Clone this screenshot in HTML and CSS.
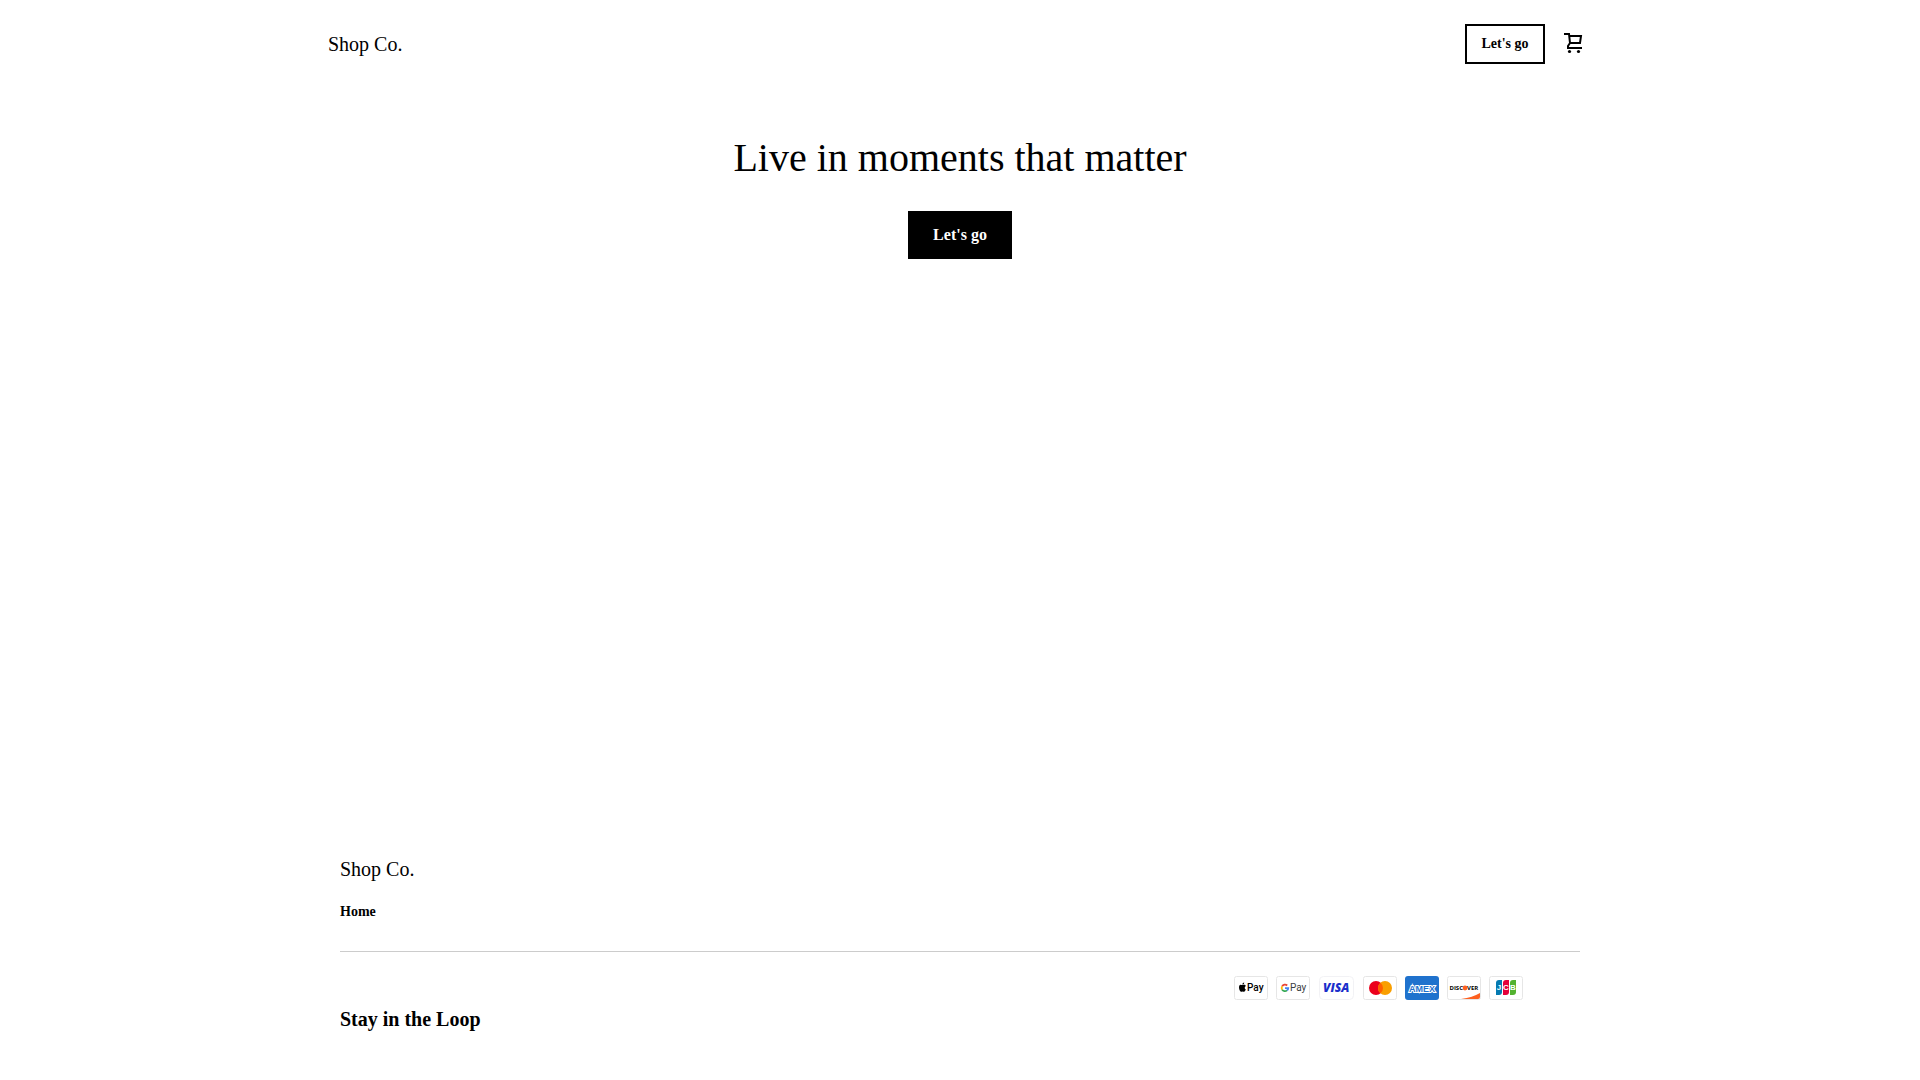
FILE: index.html
```html
<!DOCTYPE html>
<html lang="en">
	<head>
		<meta charset="UTF-8">
		<meta name="viewport" content="width=device-width, initial-scale=1">
		<title>Shop Co.</title>
		<link rel="stylesheet" href="styles.css">
	</head>
	<body>
		<header class="header">
			<a class="brand" href="#">Shop Co.</a>
			<div class="header-actions">
				<button class="btn btn-outline" type="button">Let's go</button>
				<button class="cart" type="button" aria-label="Cart">
					<svg width="20" height="22" viewBox="0 0 20 22" fill="none" stroke="#000" stroke-width="2">
						<path d="M0 2h5l1 9h10l1-7H5M6 11l-2 3v2h14"/>
						<circle cx="5.500" cy="19.500" r="1.600" fill="#000" stroke="none"/>
						<circle cx="14.500" cy="19.500" r="1.600" fill="#000" stroke="none"/>
					</svg>
				</button>
			</div>
		</header>
		<main class="hero">
			<h1>Live in moments that matter</h1>
			<button class="btn btn-solid" type="button">Let's go</button>
		</main>
		<footer class="footer">
			<div class="footer-top">
				<a class="brand" href="#">Shop Co.</a>
				<nav>
					<a class="footer-link" href="#">Home</a>
				</nav>
			</div>
			<div class="footer-bottom">
				<h2>Stay in the Loop</h2>
				<ul class="payments">
					<li>
						<svg width="34" height="24" viewBox="0 0 34 24" role="img" aria-label="Apple Pay">
							<rect class="card" x=".5" y=".5" width="33" height="23" rx="2"/>
							<path d="M10.200 8.700c-.9 0-1.200.4-1.800.4s-1.100-.4-1.700-.4C5.500 8.700 5 10 5 11.400c0 2 1.200 4.300 2.300 4.300.5 0 .8-.3 1.400-.3s.8.300 1.400.3c.7 0 1.400-1.300 1.700-2.100-1.500-.7-1.400-2.900.1-3.600-.4-.8-1-1.300-1.700-1.300zM10.200 6.500C9 6.700 8.300 7.500 8.400 8.600c1.100 0 1.900-.9 1.800-2.100z"/>
							<text class="pay" x="13" y="15">Pay</text>
						</svg>
					</li>
					<li>
						<svg width="34" height="24" viewBox="0 0 34 24" role="img" aria-label="Google Pay">
							<rect class="card" x=".5" y=".5" width="33" height="23" rx="2"/>
							<g fill="none" stroke-width="1.800">
								<path stroke="#ea4335" d="M6.100 10.400a3.200 3.200 0 0 1 5.100-.9"/>
								<path stroke="#fbbc04" d="M6.100 13.600a3.200 3.200 0 0 1 0-3.200"/>
								<path stroke="#34a853" d="M6.100 13.600a3.200 3.200 0 0 0 4.900.8"/>
								<path stroke="#4285f4" d="M9 12.100h3.200a3.200 3.200 0 0 1-1.200 2.300"/>
							</g>
							<text class="pay gpay" x="14" y="15">Pay</text>
						</svg>
					</li>
					<li>
						<svg width="37" height="24" viewBox="0 0 37 24" role="img" aria-label="Visa">
							<rect class="card card-light" x="1.500" y=".5" width="34" height="23" rx="4"/>
							<text class="visa" x="5" y="16">VISA</text>
						</svg>
					</li>
					<li>
						<svg width="34" height="24" viewBox="0 0 34 24" role="img" aria-label="Mastercard">
							<rect class="card" x=".5" y=".5" width="33" height="23" rx="2"/>
							<circle cx="13" cy="12" r="7" fill="#eb001b"/>
							<circle cx="22" cy="12" r="7" fill="#f99f00"/>
							<path fill="#ff5f00" d="M17.500 6.640a7 7 0 0 1 0 10.720a7 7 0 0 1 0-10.720z"/>
						</svg>
					</li>
					<li>
						<svg width="34" height="24" viewBox="0 0 34 24" role="img" aria-label="American Express">
							<rect width="34" height="24" rx="3" fill="#1f72cd"/>
							<text class="amex" x="17" y="16">AMEX</text>
						</svg>
					</li>
					<li>
						<svg width="34" height="24" viewBox="0 0 34 24" role="img" aria-label="Discover">
							<rect class="card" x=".5" y=".5" width="33" height="23" rx="2"/>
							<path fill="#fd6020" d="M14 23c8-1 14-3 19-6v4a2 2 0 0 1-2 2z"/>
							<text class="discover disc" x="16" y="14">DISC</text>
							<circle cx="18" cy="12" r="2.400" fill="#fd6020"/>
							<text class="discover" x="20" y="14">VER</text>
						</svg>
					</li>
					<li>
						<svg width="34" height="24" viewBox="0 0 34 24" role="img" aria-label="JCB">
							<rect class="card" x=".5" y=".5" width="33" height="23" rx="2"/>
							<path fill="#047ab1" d="M7 7a3 3 0 0 1 3-3h3v12a3 3 0 0 1-3 3H7z"/>
							<path fill="#e4003a" d="M14 7a3 3 0 0 1 3-3h3v12a3 3 0 0 1-3 3h-3z"/>
							<path fill="#53b230" d="M21 7a3 3 0 0 1 3-3h3v12a3 3 0 0 1-3 3h-3z"/>
							<text class="jcb" x="10" y="14">J</text>
							<text class="jcb" x="17" y="14">C</text>
							<text class="jcb" x="24" y="14">B</text>
						</svg>
					</li>
				</ul>
			</div>
		</footer>
	</body>
</html>
```

FILE: styles.css
```css
*{
	box-sizing: border-box;
}
body{
	margin: 0;
	background: #fff;
	color: #000;
	font-family: "Liberation Serif", "Times New Roman", serif;
	font-size: 16px;
}
h1, h2, ul{
	margin: 0;
	padding: 0;
}
li{
	list-style: none;
}
a{
	color: inherit;
	text-decoration: none;
}
button{
	font-family: inherit;
	color: inherit;
	cursor: pointer;
}
svg{
	display: block;
}

/* header */
.header{
	display: flex;
	align-items: center;
	justify-content: space-between;
	max-width: 1280px;
	margin: 0 auto;
	padding: 24px 8px;
}
.brand{
	font-size: 20px;
	line-height: 24px;
}
.header-actions{
	display: flex;
	align-items: center;
	gap: 19px;
}
.btn{
	border: 2px solid #000;
	font-weight: bold;
}
.btn-outline{
	min-width: 80px;
	height: 40px;
	padding: 0 12px;
	background: #fff;
	font-size: 14px;
}
.cart{
	padding: 0 8px 2px 0;
	border: 0;
	background: none;
}

/* hero */
.hero{
	display: flex;
	flex-direction: column;
	align-items: center;
	gap: 29px;
	min-height: 769px;
	padding: 46px 24px;
}
.hero h1{
	font-size: 40px;
	font-weight: normal;
	line-height: 48px;
	text-align: center;
}
.btn-solid{
	min-width: 104px;
	height: 48px;
	padding: 0 20px;
	background: #000;
	color: #fff;
	font-size: 16px;
}

/* footer */
.footer{
	max-width: 1280px;
	margin: 0 auto;
	padding: 0 20px;
}
.footer-top{
	display: flex;
	flex-direction: column;
	gap: 21px;
	padding-bottom: 29px;
	border-bottom: 1px solid #ccc;
}
.footer-link{
	display: block;
	font-size: 14px;
	font-weight: bold;
	line-height: 20px;
}
.footer-bottom{
	display: flex;
	flex-wrap: wrap;
	align-items: flex-start;
	justify-content: space-between;
	padding: 24px 57px 24px 0;
}
.footer-bottom h2{
	padding-top: 31px;
	font-size: 20px;
	line-height: 24px;
}
.payments{
	display: flex;
	gap: 8px;
}
.card{
	fill: #fff;
	stroke: #e6e6e6;
}
.card-light{
	stroke: #f2f2f5;
}
.pay{
	font: 500 10px Roboto, sans-serif;
}
.gpay{
	fill: #3c4043;
	font-weight: normal;
}
.visa{
	fill: #1a2fcb;
	font: italic 800 12px "Open Sans", sans-serif;
}
.amex{
	fill: #1f72cd;
	stroke: #fff;
	stroke-width: 2px;
	paint-order: stroke;
	font: bold 9px "Liberation Sans", sans-serif;
	text-anchor: middle;
}
.discover{
	font: bold 6px "Open Sans", sans-serif;
}
.disc{
	text-anchor: end;
}
.jcb{
	fill: #fff;
	font: bold 8px "Liberation Sans", sans-serif;
	text-anchor: middle;
}
```
